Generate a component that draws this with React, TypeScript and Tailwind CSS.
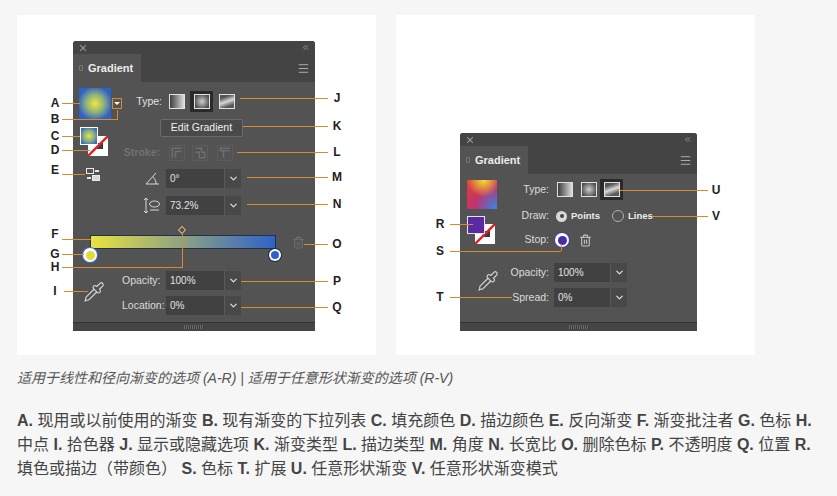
import { ChevronDown, Pipette, Trash2, X, ChevronsLeft, Menu } from "lucide-react";

const cjk = "font-['Liberation_Sans','Noto_Sans_CJK_SC',sans-serif]";

// callout lines sit over the figure, coordinates are the picture's own
const hLines = [
  "left-[62px] top-[103px] w-[18px]",
  "left-[62px] top-[119px] w-[56px]",
  "left-[62px] top-[136px] w-[18px]",
  "left-[62px] top-[150px] w-[28px]",
  "left-[62px] top-[174px] w-[23px]",
  "left-[62px] top-[239px] w-[29px]",
  "left-[62px] top-[254px] w-[22px]",
  "left-[62px] top-[267px] w-[121px]",
  "left-[64px] top-[291px] w-[24px]",
  "left-[240px] top-[98px] w-[88px]",
  "left-[243px] top-[126px] w-[85px]",
  "left-[237px] top-[152px] w-[91px]",
  "left-[247px] top-[177px] w-[81px]",
  "left-[247px] top-[204px] w-[81px]",
  "left-[304px] top-[244px] w-[24px]",
  "left-[241px] top-[281px] w-[87px]",
  "left-[241px] top-[307px] w-[87px]",
  "left-[620px] top-[190px] w-[88px]",
  "left-[652px] top-[216px] w-[56px]",
  "left-[450px] top-[224px] w-[23px]",
  "left-[450px] top-[251px] w-[111px]",
  "left-[450px] top-[297px] w-[62px]",
];

const vLines = [
  "left-[117px] top-[110px] h-[9px]",
  "left-[182px] top-[234px] h-[33px]",
  "left-[561px] top-[244px] h-[7px]",
];

const labels: [string, string][] = [
  ["A", "left-[50px] top-[96px]"],
  ["B", "left-[50px] top-[112px]"],
  ["C", "left-[50px] top-[129px]"],
  ["D", "left-[50px] top-[143px]"],
  ["E", "left-[50px] top-[163px]"],
  ["F", "left-[50px] top-[227px]"],
  ["G", "left-[50px] top-[247px]"],
  ["H", "left-[50px] top-[260px]"],
  ["I", "left-[50px] top-[284px]"],
  ["J", "left-[332px] top-[91px]"],
  ["K", "left-[332px] top-[119px]"],
  ["L", "left-[332px] top-[145px]"],
  ["M", "left-[332px] top-[170px]"],
  ["N", "left-[332px] top-[197px]"],
  ["O", "left-[332px] top-[237px]"],
  ["P", "left-[332px] top-[274px]"],
  ["Q", "left-[332px] top-[300px]"],
  ["U", "left-[711px] top-[183px]"],
  ["V", "left-[711px] top-[209px]"],
  ["R", "left-[435px] top-[217px]"],
  ["S", "left-[435px] top-[244px]"],
  ["T", "left-[435px] top-[290px]"],
];

const bodyLines: [string, string][][] = [
  [["A.", " 现用或以前使用的渐变 "], ["B.", " 现有渐变的下拉列表 "], ["C.", " 填充颜色 "], ["D.", " 描边颜色 "], ["E.", " 反向渐变 "], ["F.", " 渐变批注者 "], ["G.", " 色标 "], ["H.", ""]],
  [["", "中点 "], ["I.", " 拾色器 "], ["J.", " 显示或隐藏选项 "], ["K.", " 渐变类型 "], ["L.", " 描边类型 "], ["M.", " 角度 "], ["N.", " 长宽比 "], ["O.", " 删除色标 "], ["P.", " 不透明度 "], ["Q.", " 位置 "], ["R.", ""]],
  [["", "填色或描边（带颜色） "], ["S.", " 色标 "], ["T.", " 扩展 "], ["U.", " 任意形状渐变 "], ["V.", " 任意形状渐变模式"]],
];

function PanelHeader() {
  return (
    <>
      <div className="flex h-[13px] items-center justify-between bg-[#444444] px-[5px] text-[#a8a8a8]">
        <X size={10} strokeWidth={2.5} />
        <ChevronsLeft size={9} strokeWidth={2} />
      </div>
      <div className="flex h-[28px] bg-[#444444]">
        <div className="flex w-[68px] items-center gap-[5px] bg-[#535353] pl-[6px] text-[11px] font-bold text-[#ececec]">
          <span className="h-[6px] w-[4px] rounded-[1px] border border-[#777777]" />
          <span>Gradient</span>
        </div>
        <div className="ml-auto flex items-center pr-[5px] text-[#c4c4c4]">
          <Menu size={13} strokeWidth={1.5} />
        </div>
      </div>
    </>
  );
}

function PanelFooter() {
  return (
    <div className="mt-auto flex h-[9px] justify-center border-t border-[#333333] bg-[#454545]">
      <span className="mt-[2px] h-[4px] w-[20px] bg-[repeating-linear-gradient(90deg,#6a6a6a_0,#6a6a6a_1px,#3e3e3e_1px,#3e3e3e_2px)]" />
    </div>
  );
}

function Field({ value, wide }: { value: string; wide?: boolean }) {
  return (
    <div className={`flex h-[19px] text-[10px] text-[#e4e4e4] ${wide ? "w-[75px]" : "w-[73px]"}`}>
      <div className={`flex items-center bg-[#414141] pl-[4px] ${wide ? "w-[58px]" : "w-[56px]"}`}>{value}</div>
      <div className="flex w-[17px] items-center justify-center border-l border-[#5a5a5a] bg-[#484848]">
        <ChevronDown size={11} strokeWidth={2.5} />
      </div>
    </div>
  );
}

function TypeIcon({ kind, active }: { kind: "linear" | "radial" | "free"; active?: boolean }) {
  const fill =
    kind === "linear"
      ? "bg-[linear-gradient(90deg,#3e3e3e,#dcdcdc)]"
      : kind === "radial"
        ? "bg-[radial-gradient(circle,#cfcfcf_0%,#4a4a4a_85%)]"
        : "bg-[linear-gradient(160deg,#555555_20%,#d8d8d8_50%,#5a5a5a_80%)]";
  return (
    <div className={`flex h-[21px] w-[23px] items-center justify-center ${active ? "bg-[#2a2a2a]" : ""}`}>
      <div className={`h-[15px] w-[16px] border border-[#e2e2e2] ${fill}`} />
    </div>
  );
}

function StrokeIcon({ kind }: { kind: number }) {
  const d = ["M3 15V3h12M7 15V7h8", "M3 3h8v5h4v7H8V8H3", "M15 3H3v3h12M7 6v9"][kind];
  return (
    <svg width="16" height="16" viewBox="0 0 18 18" fill="none" stroke="#6e6e6e" strokeWidth="2" className="border border-[#5c5c5c]">
      <path d={d} />
    </svg>
  );
}

function NoStroke() {
  return (
    <svg width="20" height="20" viewBox="0 0 20 20" className="absolute bottom-0 right-0">
      <rect width="20" height="20" fill="#ffffff" />
      <rect x="9" y="7" width="6" height="6" fill="#3a3a3a" />
      <path d="M0 20L20 0" stroke="#d8262c" strokeWidth="2.5" />
    </svg>
  );
}

function ReverseIcon() {
  return (
    <svg width="16" height="15" viewBox="0 0 16 15" fill="none" stroke="#e8e8e8">
      <rect x="1.5" y="1.5" width="7" height="5" />
      <rect x="7.5" y="8.5" width="7" height="5" fill="#d8d8d8" />
      <path d="M10 4h4M2 11h4" strokeWidth="2" />
    </svg>
  );
}

function AngleIcon() {
  return (
    <svg width="15" height="15" viewBox="0 0 15 15" fill="none" stroke="#d8d8d8">
      <path d="M14 13H1L11 2M8 6c2 2 3 4 3 7" />
    </svg>
  );
}

function AspectIcon() {
  return (
    <svg width="17" height="17" viewBox="0 0 17 17" fill="none" stroke="#d8d8d8">
      <path d="M3 1v15M1 3l2-2 2 2M1 14l2 2 2-2" />
      <ellipse cx="11.5" cy="7" rx="5" ry="3" />
      <path d="M7 13h9" />
    </svg>
  );
}

function LinearPanel() {
  return (
    <div className="ml-[56px] mt-[26px] flex h-[290px] w-[242px] flex-col overflow-hidden rounded-t-[3px] bg-[#535353]">
      <PanelHeader />
      <div className="flex h-[131px]">
        <div className="ml-[6px] w-[43px] pt-[6px]">
          <div className="flex items-center">
            <div className="h-[31px] w-[32px] bg-[radial-gradient(circle,#f0e83c_0%,#8fb27c_40%,#2f62c8_76%)]" />
            <div className="ml-[1px] flex h-[11px] w-[10px] items-center justify-center border border-[#d98a2b] text-[#ffffff]">
              <span className="h-0 w-0 border-x-[3px] border-t-[3px] border-x-transparent border-t-white" />
            </div>
          </div>
          <div className="relative ml-[1px] mt-[8px] h-[29px] w-[28px]">
            <NoStroke />
            <div className="absolute left-0 top-0 h-[18px] w-[18px] border border-white bg-[radial-gradient(circle,#e6e04c_0%,#8fb27c_45%,#3a6ac4_85%)]" />
          </div>
          <div className="ml-[6px] mt-[11px]">
            <ReverseIcon />
          </div>
        </div>
        <div className="ml-[0px] flex w-[120px] flex-col pt-[9px]">
          <div className="flex h-[21px] items-center">
            <span className="mr-[3px] w-[40px] text-right text-[10.5px] text-[#e2e2e2]">Type:</span>
            <TypeIcon kind="linear" />
            <span className="w-[2px]" />
            <TypeIcon kind="radial" active />
            <span className="w-[2px]" />
            <TypeIcon kind="free" />
          </div>
          <div className="ml-[38px] mt-[7px] flex h-[18px] w-[83px] items-center justify-center rounded-[2px] border border-[#6a6a6a] bg-[#4a4a4a] text-[10.5px] text-[#f0f0f0]">
            Edit Gradient
          </div>
          <div className="mt-[8px] flex h-[16px] items-center">
            <span className="mr-[9px] w-[38px] text-right text-[10.5px] font-bold text-[#717171]">Stroke:</span>
            <StrokeIcon kind={0} />
            <span className="w-[7px]" />
            <StrokeIcon kind={1} />
            <span className="w-[9px]" />
            <StrokeIcon kind={2} />
          </div>
          <div className="mt-[8px] flex h-[19px] items-center">
            <div className="mr-[6px] flex w-[38px] justify-end">
              <AngleIcon />
            </div>
            <Field value="0°" wide />
          </div>
          <div className="mt-[8px] flex h-[19px] items-center">
            <div className="mr-[6px] flex w-[38px] justify-end">
              <AspectIcon />
            </div>
            <Field value="73.2%" wide />
          </div>
        </div>
      </div>
      <div className="relative ml-[17px] mt-[22px] flex h-[14px] items-center">
        <div className="h-[14px] w-[186px] border border-[#24304a] bg-[linear-gradient(90deg,#e9e23f,#2f62c8)]" />
        <div className="ml-[16px] text-[#6f6f6f]">
          <Trash2 size={13} />
        </div>
        <span className="absolute left-[89px] top-[-8px] h-[6px] w-[6px] rotate-45 border border-[#e2b27a] bg-[#535353]" />
        <span className="absolute left-[-8px] top-[12px] flex h-[16px] w-[16px] items-center justify-center rounded-full bg-[#3f72d8]">
          <span className="flex h-[14px] w-[14px] items-center justify-center rounded-full bg-white">
            <span className="h-[9px] w-[9px] rounded-full bg-[#e4dc36]" />
          </span>
        </span>
        <span className="absolute left-[178px] top-[13px] flex h-[14px] w-[14px] items-center justify-center rounded-full bg-[#1c2c50]">
          <span className="flex h-[12px] w-[12px] items-center justify-center rounded-full bg-white">
            <span className="h-[8px] w-[8px] rounded-full bg-[#2f62c8]" />
          </span>
        </span>
      </div>
      <div className="mt-[22px] flex">
        <div className="ml-[10px] w-[39px] pt-[10px] text-[#d8d8d8]">
          <Pipette size={22} strokeWidth={1.2} />
        </div>
        <div className="flex w-[120px] flex-col gap-[6px]">
          <div className="flex h-[19px] items-center">
            <span className="mr-[6px] w-[38px] whitespace-nowrap text-right text-[10.5px] text-[#dcdcdc]">Opacity:</span>
            <Field value="100%" wide />
          </div>
          <div className="flex h-[19px] items-center">
            <span className="mr-[6px] w-[38px] whitespace-nowrap text-right text-[10.5px] text-[#dcdcdc]">Location:</span>
            <Field value="0%" wide />
          </div>
        </div>
      </div>
      <PanelFooter />
    </div>
  );
}

function FreeformPanel() {
  return (
    <div className="ml-[64px] mt-[118px] flex h-[198px] w-[237px] flex-col overflow-hidden rounded-t-[3px] bg-[#535353]">
      <PanelHeader />
      <div className="flex">
        <div className="ml-[7px] w-[43px] pt-[6px]">
          <div className="h-[29px] w-[30px] bg-[radial-gradient(circle_at_55%_0%,#f5e02e_0%,transparent_50%),radial-gradient(circle_at_100%_100%,#2f8fe0_0%,transparent_55%),linear-gradient(135deg,#d8413a,#b5248f)]" />
          <div className="relative mt-[7px] h-[28px] w-[28px]">
            <NoStroke />
            <div className="absolute left-0 top-0 h-[18px] w-[18px] border border-[#e6e0f2] bg-[#5a2aa0]" />
          </div>
          <div className="ml-[10px] mt-[26px] text-[#d8d8d8]">
            <Pipette size={22} strokeWidth={1.2} />
          </div>
        </div>
        <div className="flex flex-col pt-[5px]">
          <div className="flex h-[21px] items-center">
            <span className="mr-[4px] w-[39px] text-right text-[10.5px] text-[#dcdcdc]">Type:</span>
            <TypeIcon kind="linear" />
            <span className="w-[1px]" />
            <TypeIcon kind="radial" />
            <TypeIcon kind="free" active />
          </div>
          <div className="mt-[9px] flex h-[14px] items-center text-[10.5px]">
            <span className="w-[39px] text-right text-[#dcdcdc]">Draw:</span>
            <span className="ml-[7px] flex h-[11px] w-[11px] items-center justify-center rounded-full bg-[#d8d8d8]">
              <span className="h-[4px] w-[4px] rounded-full bg-[#444444]" />
            </span>
            <span className="ml-[4px] text-[9.5px] font-bold text-[#ececec]">Points</span>
            <span className="ml-[12px] h-[12px] w-[12px] rounded-full border border-[#b0b0b0]" />
            <span className="ml-[4px] text-[9.5px] font-bold text-[#ececec]">Lines</span>
          </div>
          <div className="mt-[9px] flex h-[16px] items-center">
            <span className="w-[39px] text-right text-[10.5px] text-[#dcdcdc]">Stop:</span>
            <span className="ml-[5px] flex h-[16px] w-[16px] items-center justify-center rounded-full bg-[#3f3fb8]">
              <span className="flex h-[14px] w-[14px] items-center justify-center rounded-full bg-white">
                <span className="h-[9px] w-[9px] rounded-full bg-[#4a2aa8]" />
              </span>
            </span>
            <span className="ml-[9px] text-[#c8c8c8]">
              <Trash2 size={13} />
            </span>
          </div>
          <div className="mt-[15px] flex h-[19px] items-center">
            <span className="mr-[5px] w-[39px] whitespace-nowrap text-right text-[10.5px] text-[#dcdcdc]">Opacity:</span>
            <Field value="100%" />
          </div>
          <div className="mt-[6px] flex h-[19px] items-center">
            <span className="mr-[5px] w-[39px] whitespace-nowrap text-right text-[10.5px] text-[#dcdcdc]">Spread:</span>
            <Field value="0%" />
          </div>
        </div>
      </div>
      <PanelFooter />
    </div>
  );
}

export default function App() {
  return (
    <div className={`h-[496px] w-[837px] overflow-hidden bg-[#f6f6f6] ${cjk}`}>
      <div className="relative flex gap-[20px] pl-[17px] pt-[15px]">
        <div className="flex h-[340px] w-[359px] items-start bg-white">
          <LinearPanel />
        </div>
        <div className="flex h-[340px] w-[359px] items-start bg-white">
          <FreeformPanel />
        </div>
        {hLines.map((c) => (
          <span key={c} className={`absolute h-px bg-[#d98a2b] ${c}`} />
        ))}
        {vLines.map((c) => (
          <span key={c} className={`absolute w-px bg-[#d98a2b] ${c}`} />
        ))}
        {labels.map(([t, c]) => (
          <span key={t} className={`absolute w-[10px] text-center text-[12px] font-bold leading-[14px] text-[#222222] ${c}`}>
            {t}
          </span>
        ))}
      </div>
      <p className="ml-[17px] mt-[14px] text-[14px] italic leading-[18px] text-[#555555]">
        适用于线性和径向渐变的选项 (A-R) | 适用于任意形状渐变的选项 (R-V)
      </p>
      <div className="ml-[17px] mt-[22px] whitespace-pre text-[16px] leading-[24px] text-[#444444]">
        {bodyLines.map((line, i) => (
          <div key={i}>
            {line.map(([b, t], j) => (
              <span key={j}>
                <b>{b}</b>
                {t}
              </span>
            ))}
          </div>
        ))}
      </div>
    </div>
  );
}
